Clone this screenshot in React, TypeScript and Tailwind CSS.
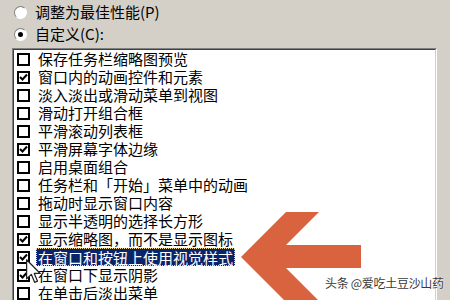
import React from 'react';

interface Item {
    label: string;
    checked: boolean;
    selected?: boolean;
}

const items: Item[] = [
    { label: '保存任务栏缩略图预览', checked: false },
    { label: '窗口内的动画控件和元素', checked: true },
    { label: '淡入淡出或滑动菜单到视图', checked: false },
    { label: '滑动打开组合框', checked: false },
    { label: '平滑滚动列表框', checked: false },
    { label: '平滑屏幕字体边缘', checked: true },
    { label: '启用桌面组合', checked: false },
    { label: '任务栏和「开始」菜单中的动画', checked: false },
    { label: '拖动时显示窗口内容', checked: false },
    { label: '显示半透明的选择长方形', checked: false },
    { label: '显示缩略图，而不是显示图标', checked: true },
    { label: '在窗口和按钮上使用视觉样式', checked: true, selected: true },
    { label: '在窗口下显示阴影', checked: true },
    { label: '在单击后淡出菜单', checked: false },
];

// classic sunken radio button
function Radio({ on }: { on?: boolean }) {
    return (
        <div className="w-[13px] h-[13px] rounded-full border-t-[#808080] border-l-[#808080] border-r-white border-b-white border bg-white flex items-center justify-center">
            {on && <div className="w-[5px] h-[5px] rounded-full bg-black" />}
        </div>
    );
}

function Check({ on }: { on: boolean }) {
    return (
        <div className="w-[13px] h-[13px] border-2 border-black bg-white flex items-center justify-center">
            {on && (
                <svg width="9" height="9" viewBox="0 0 9 9">
                    <path d="M1 4 L3.5 6.5 L8 1.5" fill="none" stroke="#000" strokeWidth="2" />
                </svg>
            )}
        </div>
    );
}

export default function App() {
    return (
        <div className="relative w-[450px] h-[300px] overflow-hidden bg-[#d4d0c8] text-black text-[15px] leading-[18px] font-['Noto_Sans_CJK_SC','Noto_Sans',sans-serif]">
            {/* radio options */}
            <div className="flex flex-col gap-[4px] pt-[3px] pl-[14px]">
                <div className="h-[18px] flex items-center gap-[8px]">
                    <Radio />
                    <span>调整为最佳性能(P)</span>
                </div>
                <div className="h-[18px] flex items-center gap-[8px]">
                    <Radio on />
                    <span>自定义(C):</span>
                </div>
            </div>

            {/* list box, sunken frame */}
            <div className="mt-[5px] ml-[12px] w-[425px] border-t border-l border-t-[#808080] border-l-[#808080] border-r border-b border-r-white border-b-white">
                <div className="border-t border-l border-t-[#404040] border-l-[#404040] border-r border-b border-r-[#d4d0c8] border-b-[#d4d0c8] bg-white">
                    {items.map((it) => (
                        <div key={it.label} className="h-[18px] flex items-center pl-[3px] gap-[6px]">
                            <Check on={it.checked} />
                            <span
                                className={
                                    it.selected
                                        ? 'h-[18px] px-[1px] bg-[#0a246a] text-white border border-dotted border-[#f5db95] whitespace-nowrap'
                                        : 'px-[2px] whitespace-nowrap'
                                }
                            >
                                {it.label}
                            </span>
                        </div>
                    ))}
                </div>
            </div>

            {/* mouse pointer */}
            <svg className="absolute left-[26px] top-[259px]" width="16" height="25" viewBox="0 0 13 20">
                <path d="M0.5 0.5 L0.5 16 L4.3 12.3 L7 18.8 L9.3 17.8 L6.7 11.6 L11.6 11.6 Z" fill="#fff" stroke="#222" strokeWidth="1" strokeLinejoin="round" />
            </svg>

            {/* big orange arrow */}
            <svg className="absolute left-[240px] top-[210px]" width="125" height="95" viewBox="0 0 125 95">
                <polygon
                    points="1,47 46,2 79,2 46,35 121,35 121,58 46,58 80,92 46,92"
                    fill="#d9623f"
                />
            </svg>

            {/* watermark */}
            <div className="absolute left-[325px] top-[276px] text-[12px] leading-[14px] text-[#3a3a3a] tracking-[-0.3px] [text-shadow:0_0_2px_#fff,0_0_1px_#fff]">
                头条 @爱吃土豆沙山药
            </div>
        </div>
    );
}
